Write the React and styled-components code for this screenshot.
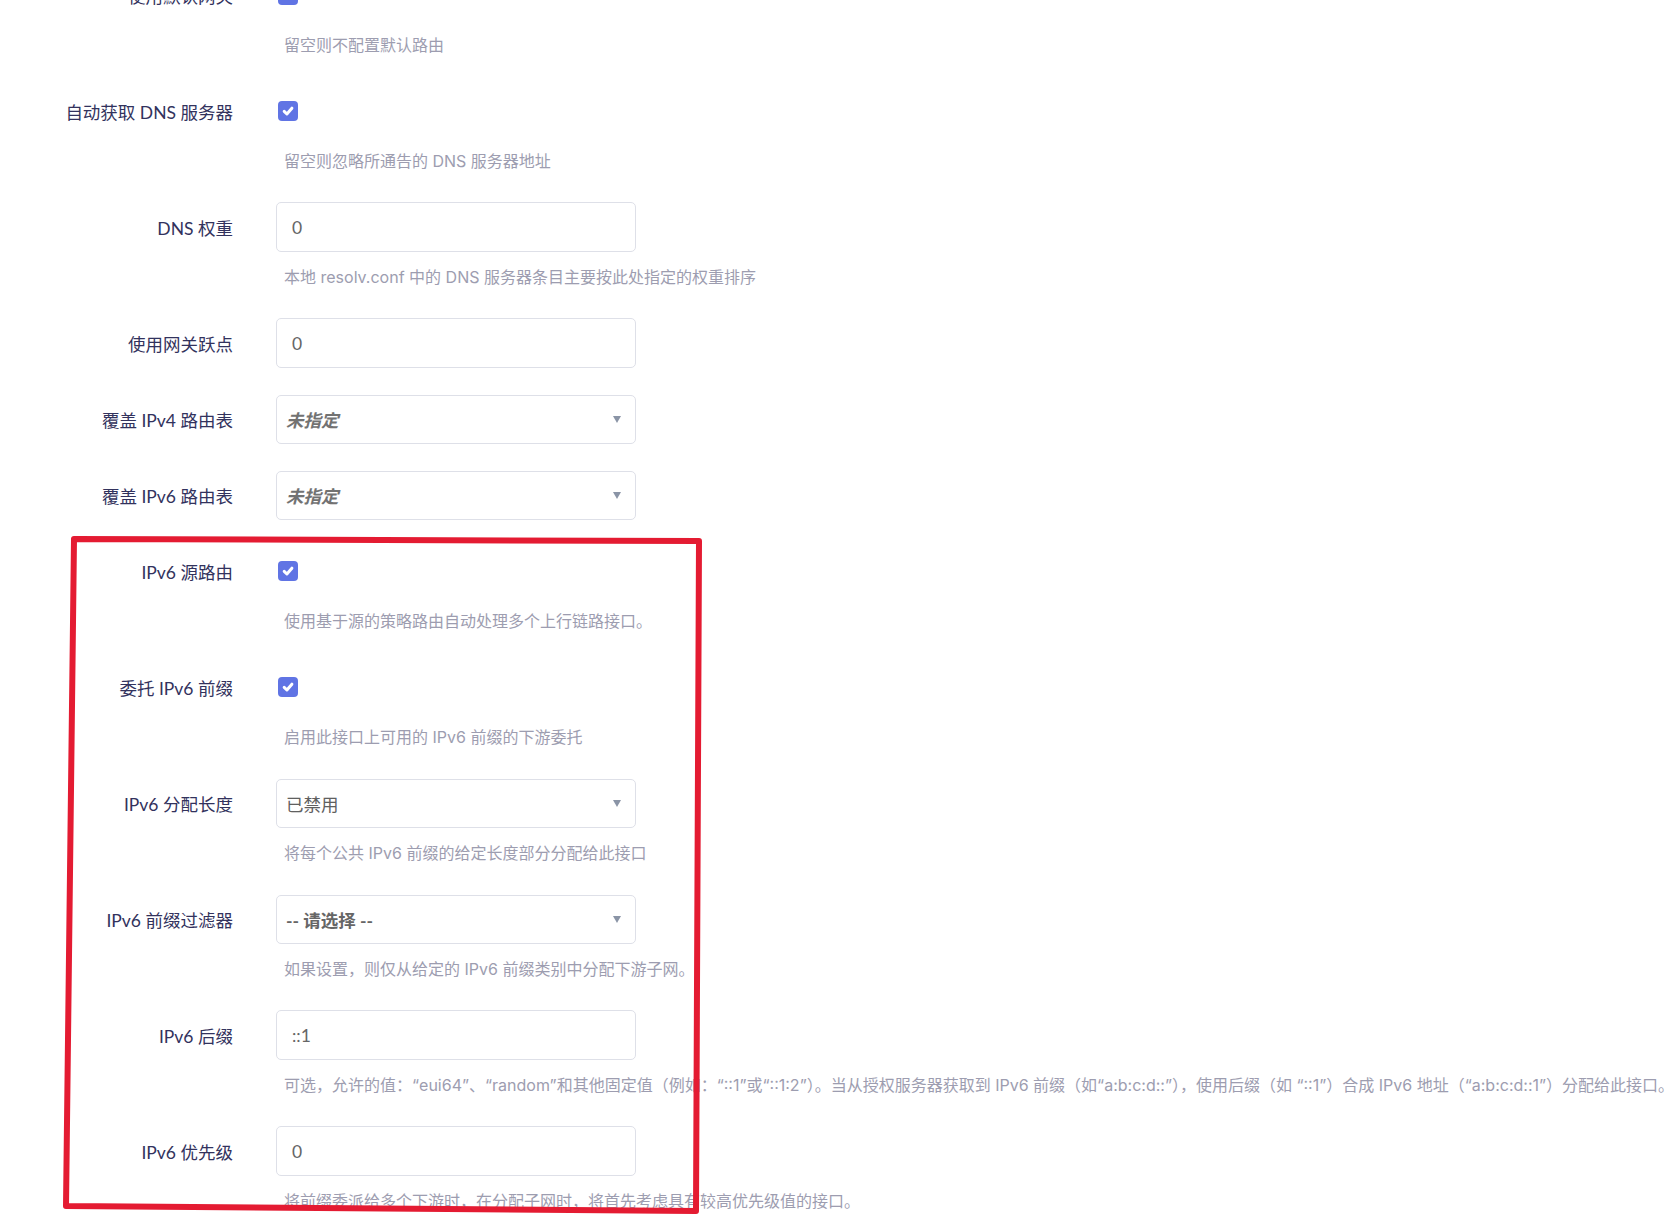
import React from "react";
import styled, { createGlobalStyle, css } from "styled-components";

const GlobalStyle = createGlobalStyle`
  html, body {
    margin: 0;
    padding: 0;
    background: #ffffff;
    overflow: hidden;
  }
  body {
    font-family: Lato, "Noto Sans CJK SC", "Noto Sans", sans-serif;
    -webkit-font-smoothing: antialiased;
  }
`;

const rows = [
  { label: "使用默认网关", type: "check", hint: "留空则不配置默认路由" },
  { label: "自动获取 DNS 服务器", type: "check", hint: "留空则忽略所通告的 DNS 服务器地址" },
  {
    label: "DNS 权重",
    type: "input",
    value: "0",
    hint: "本地 resolv.conf 中的 DNS 服务器条目主要按此处指定的权重排序",
  },
  { label: "使用网关跃点", type: "input", value: "0" },
  { label: "覆盖 IPv4 路由表", type: "select", value: "未指定", tone: "unset" },
  { label: "覆盖 IPv6 路由表", type: "select", value: "未指定", tone: "unset" },
  {
    label: "IPv6 源路由",
    type: "check",
    hint: "使用基于源的策略路由自动处理多个上行链路接口。",
  },
  { label: "委托 IPv6 前缀", type: "check", hint: "启用此接口上可用的 IPv6 前缀的下游委托" },
  {
    label: "IPv6 分配长度",
    type: "select",
    value: "已禁用",
    tone: "normal",
    hint: "将每个公共 IPv6 前缀的给定长度部分分配给此接口",
  },
  {
    label: "IPv6 前缀过滤器",
    type: "select",
    value: "-- 请选择 --",
    tone: "choose",
    hint: "如果设置，则仅从给定的 IPv6 前缀类别中分配下游子网。",
  },
  {
    label: "IPv6 后缀",
    type: "input",
    value: "::1",
    hint: "可选，允许的值：“eui64”、“random”和其他固定值（例如：“::1”或“::1:2”）。当从授权服务器获取到 IPv6 前缀（如“a:b:c:d::”），使用后缀（如 “::1”）合成 IPv6 地址（“a:b:c:d::1”）分配给此接口。",
  },
  {
    label: "IPv6 优先级",
    type: "input",
    value: "0",
    hint: "将前缀委派给多个下游时，在分配子网时，将首先考虑具有较高优先级值的接口。",
  },
];

export default function App() {
  return (
    <>
      <GlobalStyle />
      <Page>
        <Form>
          {rows.map((row) => (
            <Row key={row.label}>
              <Label>{row.label}</Label>
              <Field>
                {row.type === "check" && (
                  <CheckBox>
                    <svg width="14" height="14" viewBox="0 0 14 14">
                      <path
                        d="M3.2 7.4 L5.9 10 L10.9 4.2"
                        fill="none"
                        stroke="#fff"
                        strokeWidth="3"
                        strokeLinecap="round"
                        strokeLinejoin="round"
                      />
                    </svg>
                  </CheckBox>
                )}
                {row.type === "input" && <TextInput value={row.value} readOnly />}
                {row.type === "select" && (
                  <SelectBox>
                    <SelectValue $tone={row.tone}>{row.value}</SelectValue>
                    <Caret />
                  </SelectBox>
                )}
              </Field>
              {row.hint && <Hint>{row.hint}</Hint>}
            </Row>
          ))}
        </Form>
        <Annotation width="1677" height="1224" viewBox="0 0 1677 1224">
          <path
            d="M74 539 L699 541 L696 1211 L66 1206 Z"
            fill="none"
            stroke="#e41b32"
            strokeWidth="6"
            strokeLinejoin="round"
          />
        </Annotation>
      </Page>
    </>
  );
}

const Page = styled.div`
  position: relative;
  display: flow-root;
  width: 1677px;
  height: 1224px;
  overflow: hidden;
`;

const Form = styled.div`
  margin-top: -30px;
`;

const Row = styled.div`
  display: grid;
  grid-template-columns: 233px 360px;
  column-gap: 43px;
  margin-bottom: 26px;
`;

const Label = styled.div`
  height: 50px;
  display: flex;
  align-items: center;
  justify-content: flex-end;
  font-size: 17.5px;
  color: #32325d;
  white-space: nowrap;
`;

const Field = styled.div`
  height: 50px;
  display: flex;
  align-items: center;
`;

const CheckBox = styled.span`
  width: 20px;
  height: 20px;
  margin-left: 2px;
  border-radius: 4px;
  background: #6074e4;
  display: flex;
  align-items: center;
  justify-content: center;
`;

const boxBase = css`
  box-sizing: border-box;
  width: 360px;
  border: 1px solid #dee0e8;
  border-radius: 5px;
  background: #fff;
`;

const TextInput = styled.input`
  ${boxBase};
  height: 50px;
  padding: 0 15px;
  font-family: Lato, "Noto Sans CJK SC", sans-serif;
  font-size: 17.5px;
  color: #666;
  outline: none;
`;

const SelectBox = styled.div`
  ${boxBase};
  height: 49px;
  padding: 0 14px 0 9px;
  display: flex;
  align-items: center;
  justify-content: space-between;
`;

const toneStyles = {
  unset: css`
    font-style: italic;
    font-weight: 700;
    color: #727272;
  `,
  choose: css`
    font-weight: 700;
    color: #666;
  `,
  normal: css`
    color: #606060;
  `,
};

const SelectValue = styled.span`
  font-size: 17.5px;
  ${(p) => toneStyles[p.$tone]};
`;

const Caret = styled.span`
  width: 0;
  height: 0;
  border-left: 4.5px solid transparent;
  border-right: 4.5px solid transparent;
  border-top: 7px solid #8a94a6;
`;

const Hint = styled.div`
  grid-column: 2;
  margin: 13px 0 3px;
  padding-left: 8px;
  font-family: Inter, "Noto Sans CJK SC", sans-serif;
  font-size: 16px;
  line-height: 24px;
  color: #9d9db0;
  white-space: nowrap;
`;

const Annotation = styled.svg`
  position: absolute;
  top: 0;
  left: 0;
  pointer-events: none;
`;
